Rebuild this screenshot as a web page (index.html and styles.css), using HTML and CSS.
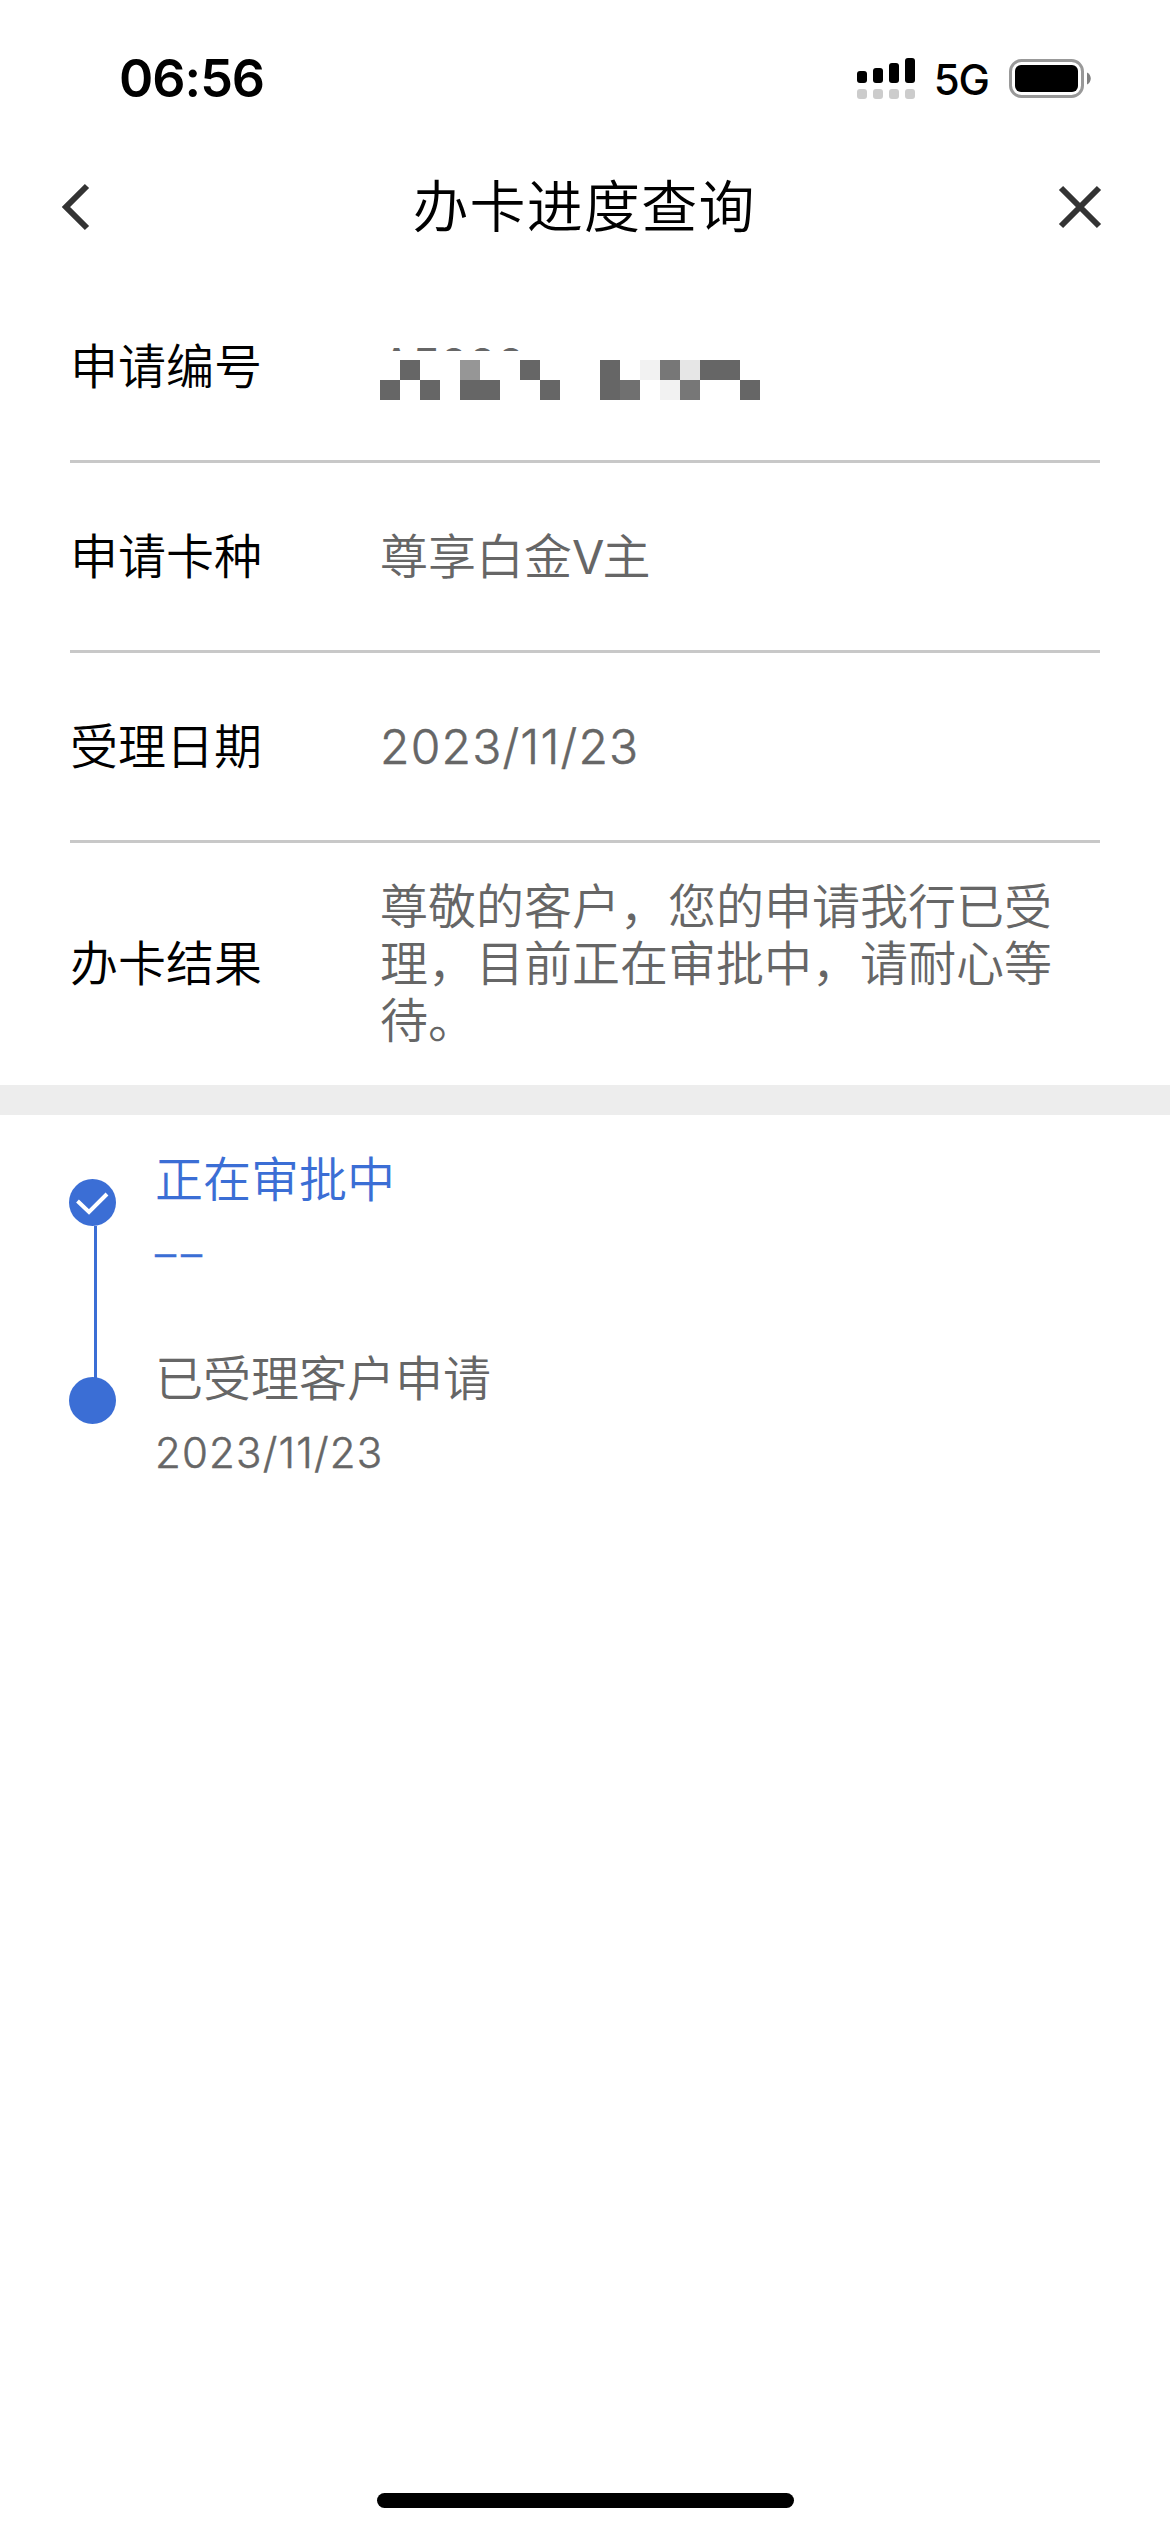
FILE: index.html
```
<!DOCTYPE html>
<html lang="zh-CN">
<head>
  <meta charset="UTF-8">
  <meta name="viewport" content="width=device-width, initial-scale=1.0">
  <title>办卡进度查询</title>
  <link rel="stylesheet" href="styles.css">
</head>
<body>

  <div class="status-bar">
    <span class="time">06:56</span>
    <div class="status-icons">
      <svg class="signal" width="58" height="41" viewBox="0 0 58 41">
        <rect x="0" y="13" width="10" height="12" rx="3"/>
        <rect x="16" y="10" width="10" height="15" rx="3"/>
        <rect x="32" y="5" width="10" height="20" rx="3"/>
        <rect x="48" y="0" width="10" height="25" rx="3"/>
        <g fill="#ccc">
          <rect x="0" y="31" width="10" height="10" rx="3"/>
          <rect x="16" y="31" width="10" height="10" rx="3"/>
          <rect x="32" y="31" width="10" height="10" rx="3"/>
          <rect x="48" y="31" width="10" height="10" rx="3"/>
        </g>
      </svg>
      <span class="network">5G</span>
      <svg class="battery" width="82" height="39" viewBox="0 0 82 39">
        <rect x="1.5" y="1.5" width="72" height="36" rx="11" fill="none" stroke="#999" stroke-width="3"/>
        <rect x="6" y="6" width="63" height="27" rx="6"/>
        <path d="M78 13.5c5 2 5 10 0 12z" fill="#808080"/>
      </svg>
    </div>
  </div>

  <header class="nav-bar">
    <svg class="nav-icon" width="30" height="50" viewBox="0 0 30 50">
      <path d="M26 4L5 25l21 21"/>
    </svg>
    <h1>办卡进度查询</h1>
    <svg class="nav-icon" width="50" height="50" viewBox="0 0 50 50">
      <path d="M6 6l38 38M44 6L6 44"/>
    </svg>
  </header>

  <main>
    <div class="info-list">
      <div class="info-row">
        <span class="label">申请编号</span>
        <div class="value masked">
          <div class="masked-text">A5000</div>
          <svg width="380" height="40" viewBox="0 0 380 40" shape-rendering="crispEdges">
            <g fill="#666">
              <path d="M20 0h20v20H20zM0 20h20v20H0zM40 20h20v20H40zM80 20h40v20H80zM140 0h20v20h-20zM160 20h20v20h-20z"/>
              <path d="M220 0h20v40h-20zM320 0h40v20h-40zM360 20h20v20h-20z"/>
            </g>
            <path fill="#969696" d="M80 0h20v20H80z"/>
            <path fill="#707070" d="M240 20h20v20h-20z"/>
            <path fill="#777" d="M280 0h20v20h-20zM300 20h20v20h-20z"/>
            <path fill="#f2f2f2" d="M260 0h20v20h-20zM280 20h20v20h-20z"/>
            <path fill="#e6e6e6" d="M300 0h20v20h-20z"/>
          </svg>
        </div>
      </div>
      <div class="info-row">
        <span class="label">申请卡种</span>
        <span class="value">尊享白金<span class="latin">V</span>主</span>
      </div>
      <div class="info-row">
        <span class="label">受理日期</span>
        <span class="value date">2023/11/23</span>
      </div>
      <div class="info-row">
        <span class="label">办卡结果</span>
        <span class="value">尊敬的客户，您的申请我行已受理，目前正在审批中，请耐心等待。</span>
      </div>
    </div>

    <div class="divider"></div>

    <div class="timeline">
      <div class="step active">
        <div class="track">
          <svg class="dot" width="47" height="47" viewBox="0 0 47 47">
            <circle cx="23.5" cy="23.5" r="23.5" fill="#3b6ed5"/>
            <path d="M8.5 22L20 33 38 15" fill="none" stroke="#fff" stroke-width="4"/>
          </svg>
          <div class="line"></div>
        </div>
        <div class="step-text">
          <div class="step-title">正在审批中</div>
          <div class="step-date">––</div>
        </div>
      </div>
      <div class="step">
        <div class="track">
          <svg class="dot" width="47" height="47" viewBox="0 0 47 47">
            <circle cx="23.5" cy="23.5" r="23.5" fill="#3b6ed5"/>
          </svg>
        </div>
        <div class="step-text">
          <div class="step-title">已受理客户申请</div>
          <div class="step-date">2023/11/23</div>
        </div>
      </div>
    </div>
  </main>

  <div class="home-indicator"></div>

</body>
</html>
```

FILE: styles.css
```
* {
  box-sizing: border-box;
}
body {
  margin: 0;
  height: 2532px;
  display: flex;
  flex-direction: column;
  background: #fff;
  color: #000;
  font-family: "Noto Sans CJK SC", sans-serif;
  font-weight: 350;
}
svg {
  display: block;
  flex: none;
}

/* status bar */
.status-bar {
  height: 141px;
  padding: 15px 79px 0 119px;
  display: flex;
  align-items: center;
  justify-content: space-between;
  font-family: Inter, sans-serif;
}
.time {
  font-size: 52px;
  font-weight: 600;
  letter-spacing: -1px;
}
.status-icons {
  display: flex;
  align-items: center;
}
.network {
  margin: 2px 20px 0 19px;
  font-size: 42px;
  font-weight: 500;
  letter-spacing: -1px;
}

/* title bar */
.nav-bar {
  height: 132px;
  padding: 0 65px 0 61px;
  display: flex;
  align-items: center;
  justify-content: space-between;
}
.nav-bar h1 {
  margin: 0 0 8px 22px;
  font-size: 56px;
  line-height: 80px;
  font-weight: 350;
  letter-spacing: 1.2px;
}
.nav-icon {
  fill: none;
  stroke: #333;
  stroke-width: 6;
}

/* application info */
.info-list {
  padding: 0 70px;
}
.info-row {
  height: 190px;
  display: flex;
  align-items: center;
  border-bottom: 3px solid #c8c8c8;
  font-size: 48px;
  line-height: 57px;
}
.info-row:last-child {
  height: 242px;
  border-bottom: none;
}
.label {
  width: 310px;
  flex: none;
  padding-bottom: 7px;
}
.value {
  width: 680px;
  padding-bottom: 7px;
  color: #666;
}
.latin {
  font-family: Inter, sans-serif;
  font-size: 47px;
  font-weight: 400;
  line-height: 1;
  letter-spacing: -2px;
}
.date,
.step-date {
  padding-bottom: 0;
  font-family: Inter, sans-serif;
  font-weight: 300;
  letter-spacing: 1.2px;
  -webkit-text-stroke: 0.5px currentColor;
}
.masked {
  padding: 15px 0 0;
}
.masked-text {
  height: 3px;
  margin-bottom: 9px;
  overflow: hidden;
  font-family: Inter, sans-serif;
  font-weight: 400;
  line-height: 35px;
  letter-spacing: -1.8px;
}

.divider {
  height: 30px;
  background: #ededed;
}

/* progress steps */
.timeline {
  padding: 33px 69px 0;
}
.step {
  display: flex;
  color: #666;
}
.step.active {
  height: 199px;
  color: #3b6ed5;
}
.track {
  width: 86px;
  padding-top: 31px;
  display: flex;
  flex-direction: column;
}
.step:last-child .track {
  padding-top: 30px;
}
.line {
  width: 3px;
  height: 152px;
  flex: none;
  margin-left: 25px;
  background: #3b6ed5;
}
.step-title {
  font-size: 48px;
  line-height: 57px;
}
.step-date {
  margin-top: 24px;
  font-size: 42px;
  line-height: 50px;
}
.active .step-date {
  letter-spacing: 5px;
}

.home-indicator {
  width: 417px;
  height: 15px;
  margin: auto auto 24px;
  border-radius: 8px;
  background: #000;
}
```
